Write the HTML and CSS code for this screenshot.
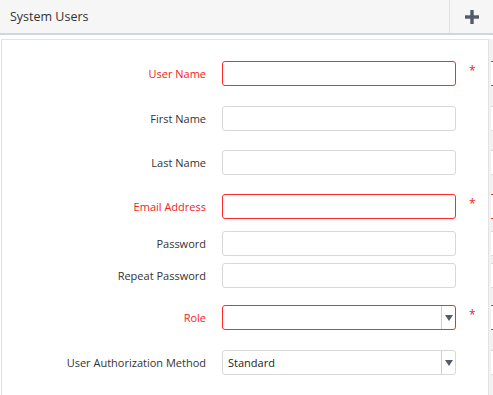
FILE: index.html
```html
<!DOCTYPE html>
<html lang="en">
<head>
    <meta charset="UTF-8">
    <meta name="viewport" content="width=device-width, initial-scale=1.0">
    <title>System Users</title>
    <link rel="stylesheet" href="styles.css">
</head>
<body>
    <div class="header">
        <div class="title">System Users</div>
        <div class="add-btn">
            <svg width="14" height="14" viewBox="0 0 14 14">
                <rect x="5.3" y="0" width="3.4" height="14" fill="#535a68"/>
                <rect x="0" y="5.3" width="14" height="3.4" fill="#535a68"/>
            </svg>
        </div>
    </div>

    <div class="page">
        <div class="panel">
            <div class="row gap-20">
                <label class="label required">User Name</label>
                <div class="field invalid"></div>
                <span class="star">*</span>
            </div>
            <div class="row gap-19">
                <label class="label">First Name</label>
                <div class="field"></div>
            </div>
            <div class="row gap-19">
                <label class="label">Last Name</label>
                <div class="field"></div>
            </div>
            <div class="row gap-12">
                <label class="label required">Email Address</label>
                <div class="field invalid"></div>
                <span class="star">*</span>
            </div>
            <div class="row gap-7">
                <label class="label">Password</label>
                <div class="field"></div>
            </div>
            <div class="row gap-17">
                <label class="label">Repeat Password</label>
                <div class="field"></div>
            </div>
            <div class="row gap-20">
                <label class="label required">Role</label>
                <div class="field select invalid">
                    <div class="select-value"></div>
                    <div class="select-btn"><span class="arrow"></span></div>
                </div>
                <span class="star">*</span>
            </div>
            <div class="row">
                <label class="label">User Authorization Method</label>
                <div class="field select">
                    <div class="select-value">Standard</div>
                    <div class="select-btn"><span class="arrow"></span></div>
                </div>
            </div>
        </div>

        <!-- edge of the next panel, cut off by the window -->
        <div class="side">
            <div class="ghost invalid gap-20"></div>
            <div class="ghost gap-19"></div>
            <div class="ghost gap-19"></div>
            <div class="ghost invalid gap-12"></div>
            <div class="ghost gap-7"></div>
            <div class="ghost gap-17"></div>
            <div class="ghost invalid gap-20"></div>
            <div class="ghost"></div>
        </div>
    </div>
</body>
</html>
```

FILE: styles.css
```css
body {
    margin: 0;
    width: 493px;
    height: 395px;
    overflow: hidden;
    font-family: "Open Sans", Arial, sans-serif;
    color: #333;
    background-color: #fff;
}
.header {
    display: flex;
    height: 33px;
    background-color: #f6f6f6;
    border-bottom: 2px solid #cfd6e0;
}
.title {
    flex: 1;
    padding-left: 10px;
    font-size: 12.5px;
    line-height: 33px;
    color: #333;
}
.add-btn {
    width: 43px;
    border-left: 1px solid #e3e3e3;
    display: flex;
    align-items: center;
    justify-content: center;
}
.page {
    display: flex;
    margin-top: 4px;
    height: 356px;
}
.panel {
    width: 486px;
    margin-left: 1px;
    padding-top: 21px;
    border: 1px solid #e2e2e2;
    border-bottom: none;
}
.row {
    display: flex;
    align-items: center;
    height: 25px;
}
.gap-20 { margin-bottom: 20px; }
.gap-19 { margin-bottom: 19px; }
.gap-17 { margin-bottom: 17px; }
.gap-12 { margin-bottom: 12px; }
.gap-7 { margin-bottom: 7px; }
.label {
    width: 204px;
    padding-right: 16px;
    text-align: right;
    font-size: 11px;
    color: #333;
}
.label.required {
    color: #f52222;
}
.field {
    box-sizing: border-box;
    width: 234px;
    height: 25px;
    border: 1px solid #d8d8d8;
    border-radius: 3px;
    background-color: #fff;
}
.field.invalid {
    border-color: #ff2b2b;
}
.star {
    align-self: flex-start;
    margin-left: 13px;
    margin-top: 1px;
    font-size: 12px;
    color: #f52222;
}
.select {
    display: flex;
}
.select-value {
    flex: 1;
    padding-left: 5px;
    font-size: 11px;
    line-height: 23px;
    color: #222;
}
.select-btn {
    width: 13px;
    border-left: 1px solid #cfcfcf;
    display: flex;
    align-items: center;
    justify-content: center;
}
.arrow {
    width: 0;
    height: 0;
    border-left: 4px solid transparent;
    border-right: 4px solid transparent;
    border-top: 6px solid #555b68;
    margin-left: 1px;
}
.side {
    flex: 1;
    padding-top: 22px;
    background-color: #f2f2f2;
}
.ghost {
    box-sizing: border-box;
    height: 25px;
    margin-left: 2px;
    border-top: 1px solid #d8d8d8;
    border-bottom: 1px solid #d8d8d8;
    background-color: #fff;
}
.ghost.invalid {
    border-color: #ff2b2b;
}
```
